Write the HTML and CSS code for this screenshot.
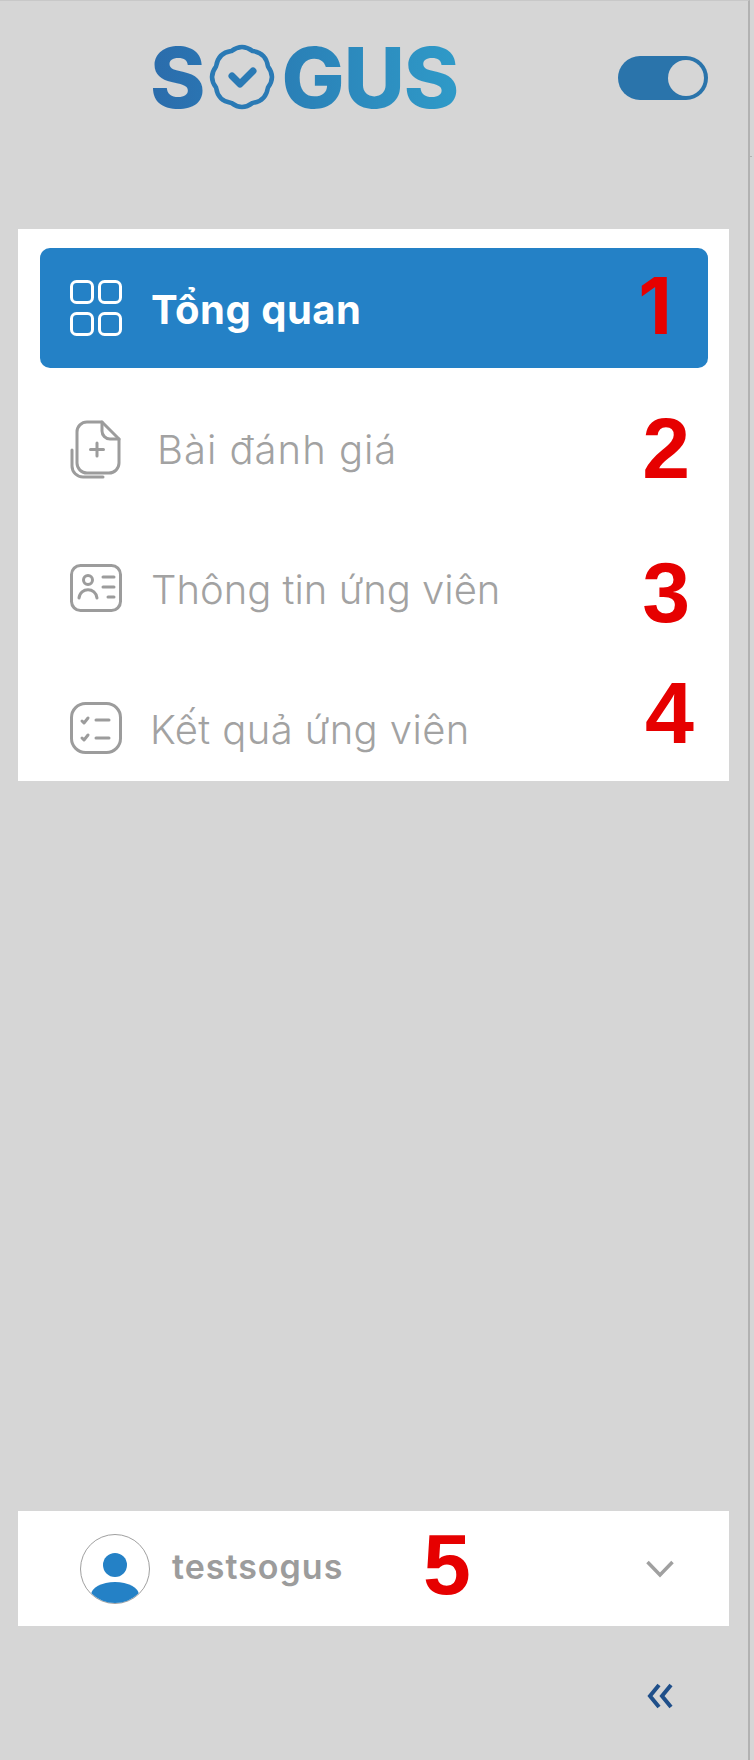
FILE: index.html
```html
<!DOCTYPE html>
<html lang="en">
<head>
  <meta charset="UTF-8">
  <title>Sogus</title>
  <link rel="stylesheet" href="styles.css">
</head>
<body>
  <aside class="sidebar">
    <header class="brand-bar">
      <div class="logo">
        <span class="logo-s">S</span>
        <svg class="logo-badge" width="68" height="68" viewBox="0 0 68 68" fill="none" stroke="#2a7ab5">
          <path d="M44.700 7.100 Q58 9 59.900 22.300 Q68 33 59.900 43.700 Q58 57 44.700 58.900 Q34 67 23.300 58.900 Q10 57 8.100 43.700 Q0 33 8.100 22.300 Q10 9 23.300 7.100 Q34 -1 44.700 7.100z" stroke-width="4.500" stroke-linejoin="round"/>
          <path d="M24 32 l8 8 13 -13" stroke-width="7" stroke-linecap="round" stroke-linejoin="round"/>
        </svg>
        <span class="logo-rest">GUS</span>
      </div>
      <div class="toggle"><span class="toggle-knob"></span></div>
    </header>

    <nav class="menu">
      <a class="menu-item active">
        <svg class="icon" width="52" height="56" viewBox="0 0 52 56" fill="none" stroke="#fff" stroke-width="3">
          <rect x="1.500" y="1.500" width="21" height="21" rx="5"/>
          <rect x="29.500" y="1.500" width="21" height="21" rx="5"/>
          <rect x="1.500" y="33.500" width="21" height="21" rx="5"/>
          <rect x="29.500" y="33.500" width="21" height="21" rx="5"/>
        </svg>
        <span class="menu-label">Tổng quan</span>
        <span class="marker marker-1">1</span>
      </a>
      <a class="menu-item">
        <svg class="icon icon-doc" width="52" height="60" viewBox="0 0 52 60" fill="none" stroke="#9c9c9c" stroke-width="3" stroke-linecap="round" stroke-linejoin="round">
          <path d="M7 12 a10 10 0 0 1 10 -10 h15 l17 17 v24 a10 10 0 0 1 -10 10 h-22 a10 10 0 0 1 -10 -10z"/>
          <path d="M32 2 v9 a8 8 0 0 0 8 8 h9"/>
          <path d="M27 23 v13 M20.500 29.500 h13"/>
          <path d="M2 30 v16 a11 11 0 0 0 11 11 h20"/>
        </svg>
        <span class="menu-label label-shift">Bài đánh giá</span>
        <span class="marker marker-2">2</span>
      </a>
      <a class="menu-item">
        <svg class="icon" width="52" height="48" viewBox="0 0 52 48" fill="none" stroke="#9c9c9c" stroke-width="3" stroke-linecap="round">
          <rect x="1.500" y="1.500" width="49" height="45" rx="9"/>
          <circle cx="18" cy="16" r="4.500"/>
          <path d="M9 34 c1 -11 17 -11 18 0"/>
          <path d="M33 13 h11 M33 23 h11 M38 33 h6"/>
        </svg>
        <span class="menu-label label-tight">Thông tin ứng viên</span>
        <span class="marker marker-3">3</span>
      </a>
      <a class="menu-item">
        <svg class="icon" width="52" height="52" viewBox="0 0 52 52" fill="none" stroke="#9c9c9c" stroke-width="3" stroke-linecap="round" stroke-linejoin="round">
          <rect x="1.500" y="1.500" width="49" height="49" rx="14"/>
          <path d="M12 19 l2 2 4 -5 M12 36 l2 2 4 -5"/>
          <path d="M26 18 h13 M26 36 h13"/>
        </svg>
        <span class="menu-label label-back">Kết quả ứng viên</span>
        <span class="marker marker-4">4</span>
      </a>
    </nav>

    <div class="spacer"></div>

    <section class="user-card">
      <div class="avatar">
        <span class="avatar-head"></span>
        <span class="avatar-body"></span>
      </div>
      <span class="user-name">testsogus</span>
      <span class="marker marker-5">5</span>
      <svg class="chevron" width="28" height="18" viewBox="0 0 28 18" fill="none" stroke="#a0a0a0" stroke-width="3.500">
        <path d="M1.500 2 L14 15 L26.500 2"/>
      </svg>
    </section>

    <div class="collapse-row">
      <svg width="26" height="26" viewBox="0 0 26 26" fill="none" stroke="#1f4f8a" stroke-width="4">
        <path d="M12 2 L3 13 L12 24 M24 2 L15 13 L24 24"/>
      </svg>
    </div>
  </aside>
</body>
</html>
```

FILE: styles.css
```css
html, body {
  margin: 0;
  height: 100%;
  background: #d6d6d6;
  font-family: Inter, "Noto Sans", sans-serif;
}
.sidebar {
  position: relative;
  box-sizing: border-box;
  width: 750px;
  height: 1760px;
  border-top: 1px solid #c8c8c8;
  border-right: 2px solid #b2b2b2;
  display: flex;
  flex-direction: column;
  padding: 0 19px 0 18px;
}
/* little scrollbar tick on the edge */
.sidebar::after {
  content: "";
  position: absolute;
  left: 750px;
  top: 155px;
  width: 2px;
  height: 1px;
  background: #b2b2b2;
}
.brand-bar {
  height: 228px;
  flex: none;
  box-sizing: border-box;
  padding: 43px 21px 0 132px;
  display: flex;
  justify-content: space-between;
  align-items: flex-start;
}
.logo {
  display: flex;
  align-items: center;
  height: 68px;
  font-weight: 800;
  font-size: 84px;
  line-height: 68px;
  letter-spacing: -1px;
}
.logo-s {
  background: linear-gradient(90deg, #2b6cab, #2a74b2);
  -webkit-background-clip: text;
  background-clip: text;
  color: transparent;
}
.logo-badge {
  margin: 0 5px 0 4px;
}
.logo-rest {
  background: linear-gradient(90deg, #2a7fb6, #2f9ac8);
  -webkit-background-clip: text;
  background-clip: text;
  color: transparent;
}
.toggle {
  box-sizing: border-box;
  width: 90px;
  height: 44px;
  margin-top: 12px;
  padding: 4px;
  border-radius: 22px;
  background: #2a74ab;
  display: flex;
  justify-content: flex-end;
}
.toggle-knob {
  width: 36px;
  height: 36px;
  border-radius: 50%;
  background: #d6d6d6;
}
.menu {
  box-sizing: border-box;
  height: 552px;
  flex: none;
  padding: 19px 21px 0 22px;
  background: #fff;
  overflow: hidden;
  display: flex;
  flex-direction: column;
  gap: 20px;
}
.menu-item {
  position: relative;
  flex: none;
  height: 120px;
  padding-left: 30px;
  border-radius: 10px;
  display: flex;
  align-items: center;
  gap: 29px;
  color: #a2a2a2;
}
.menu-item.active {
  background: #2481c6;
  color: #fff;
}
.icon {
  flex: none;
}
.icon-doc {
  margin-top: 3px;
}
.menu-label {
  font-size: 40px;
  font-weight: 300;
  line-height: 46px;
  letter-spacing: 0.4px;
  padding-top: 3px;
}
.active .menu-label {
  font-weight: 700;
  letter-spacing: 0.5px;
}
.label-shift {
  margin-left: 6px;
  letter-spacing: 1px;
}
.label-tight {
  letter-spacing: 0;
}
.label-back {
  margin-left: -1px;
}
.marker {
  position: absolute;
  font-family: "Liberation Sans", sans-serif;
  font-weight: 700;
  font-size: 86px;
  line-height: 84px;
  color: #e60000;
}
.marker-1 {
  right: 36px;
  top: 16px;
  font-family: Inter, sans-serif;
  font-size: 78px;
}
.marker-2 { right: 18px; top: 18px; }
.marker-3 { right: 18px; top: 22px; }
.marker-4 { right: 14px; top: 3px; font-size: 88px; }
.marker-5 { left: 405px; top: 11px; }
.spacer {
  flex: 1;
}
.user-card {
  position: relative;
  flex: none;
  box-sizing: border-box;
  height: 115px;
  padding: 0 55px 0 62px;
  background: #fff;
  display: flex;
  align-items: center;
}
.avatar {
  position: relative;
  flex: none;
  box-sizing: border-box;
  width: 70px;
  height: 70px;
  border: 1.5px solid #a0a0a0;
  border-radius: 50%;
  overflow: hidden;
}
.avatar-head {
  position: absolute;
  left: 22px;
  top: 18px;
  width: 24px;
  height: 24px;
  border-radius: 50%;
  background: #2481c6;
}
.avatar-body {
  position: absolute;
  left: 10px;
  top: 47px;
  width: 48px;
  height: 26px;
  border-radius: 50%;
  background: #2481c6;
}
.user-name {
  margin: 0 0 4px 22px;
  font-size: 34px;
  font-weight: 600;
  letter-spacing: 1px;
  color: #9c9c9c;
}
.chevron {
  margin-left: auto;
}
.collapse-row {
  flex: none;
  height: 134px;
  box-sizing: border-box;
  padding: 57px 56px 0 0;
  display: flex;
  justify-content: flex-end;
  align-items: flex-start;
}
```
